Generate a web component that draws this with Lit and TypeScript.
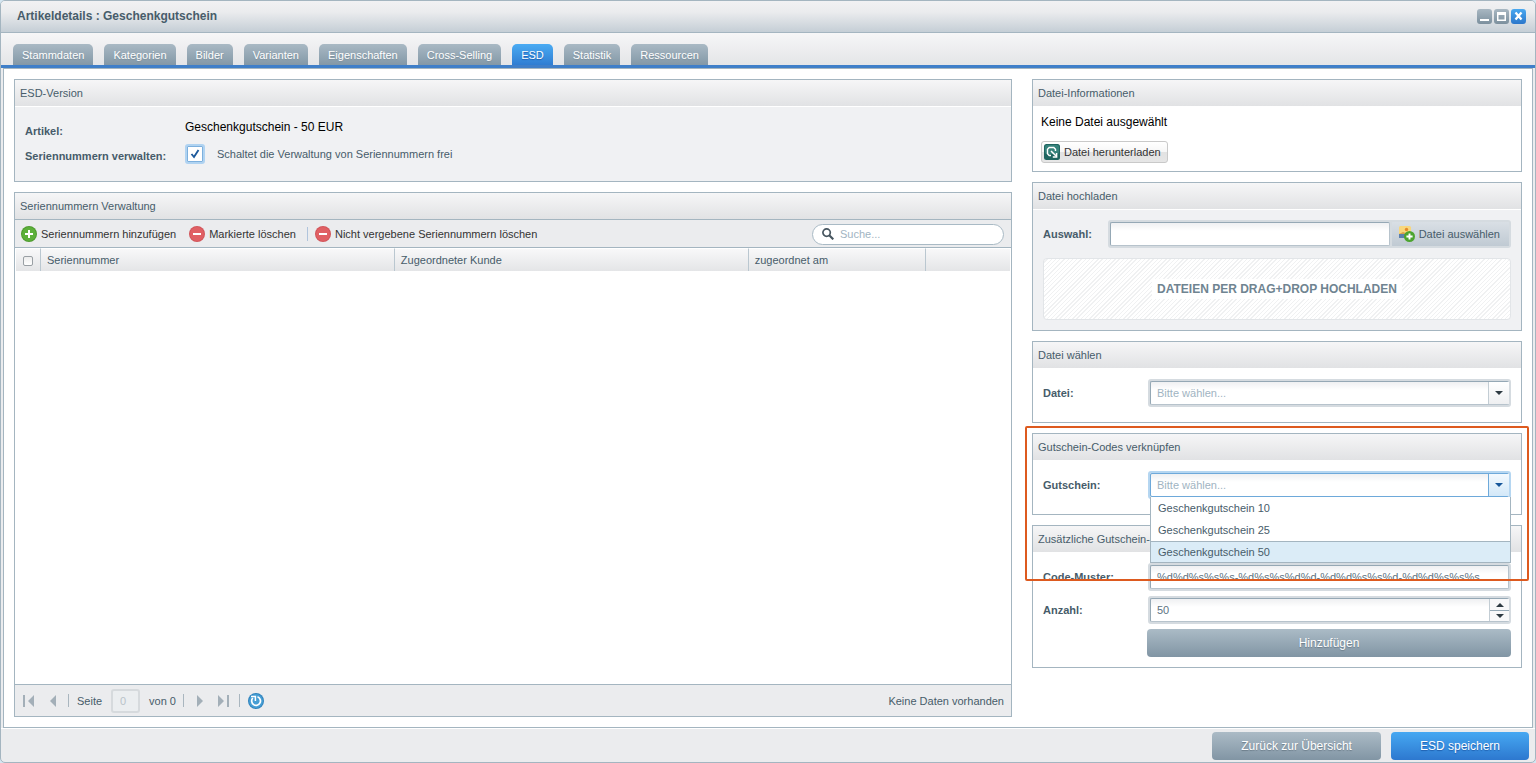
import { LitElement, html, css, svg } from "lit";
import { customElement, property } from "lit/decorators.js";
import { classMap } from "lit/directives/class-map.js";

const icons = {
  add: svg`<svg class="icon" viewBox="0 0 16 16" aria-hidden="true"><circle cx="8" cy="8" r="8" fill="#4d9a2e"/><circle cx="8" cy="8" r="7" fill="#5cb03a"/><path d="M8 4v8M4 8h8" stroke="#fff" stroke-width="2"/></svg>`,
  remove: svg`<svg class="icon" viewBox="0 0 16 16" aria-hidden="true"><circle cx="8" cy="8" r="8" fill="#d2555a"/><circle cx="8" cy="8" r="7" fill="#e06064"/><path d="M4 8h8" stroke="#fff" stroke-width="2"/></svg>`,
  download: svg`<svg class="icon" viewBox="0 0 16 16" aria-hidden="true"><rect width="16" height="16" rx="2.5" fill="#1f6560"/><rect x="1" y="1" width="14" height="9" rx="2" fill="#36827b"/><path d="M7 11.500H5.200L3.500 9.800V5.200L5.200 3.500H9.800L11.500 5.200V7" fill="none" stroke="#fff" stroke-width="1.400"/><path d="M7 7L11.800 11.800M12.600 9v4H8.800" fill="none" stroke="#fff" stroke-width="1.500"/></svg>`,
  picture: svg`<svg class="icon" viewBox="0 0 16 16" aria-hidden="true"><rect x="0" y="0" width="12" height="10" rx="1.500" fill="#f8d77d"/><circle cx="7.500" cy="3.500" r="1.700" fill="#e58a2a"/><rect x="0" y="8" width="7" height="4" fill="#5b7fae"/><path d="M0 8l4-2 5 2z" fill="#d9a14c"/><circle cx="10.500" cy="10.500" r="5.500" fill="#4ca42f"/><path d="M10.500 7.400v6.200M7.400 10.500h6.200" stroke="#fff" stroke-width="1.900"/></svg>`,
  search: svg`<svg class="lens" viewBox="0 0 12 12" aria-hidden="true"><circle cx="4.600" cy="4.600" r="3.700" fill="none" stroke="#475660" stroke-width="1.700"/><path d="M7.200 7.200L11.300 11.300" stroke="#475660" stroke-width="2.200"/></svg>`,
  first: svg`<svg class="icon" viewBox="0 0 16 16" aria-hidden="true"><path d="M2 2h2v12H2zM13 2v12L7 8z" fill="#a3afb8"/></svg>`,
  prev: svg`<svg class="icon" viewBox="0 0 16 16" aria-hidden="true"><path d="M11 2v12L5 8z" fill="#a3afb8"/></svg>`,
  next: svg`<svg class="icon" viewBox="0 0 16 16" aria-hidden="true"><path d="M5 2v12l6-6z" fill="#a3afb8"/></svg>`,
  last: svg`<svg class="icon" viewBox="0 0 16 16" aria-hidden="true"><path d="M11 2h2v12h-2zM2 2v12l6-6z" fill="#a3afb8"/></svg>`,
  refresh: svg`<svg class="icon" viewBox="0 0 16 16" aria-hidden="true"><circle cx="8" cy="8" r="8" fill="#2f83bd"/><circle cx="8" cy="8" r="7" fill="#469ed4"/><path d="M9.500 3.800A4.400 4.400 0 1 1 4.800 5" fill="none" stroke="#fff" stroke-width="1.700"/><path d="M3 3.600h4.400v4.400" fill="none" stroke="#fff" stroke-width="1.500"/></svg>`,
  down: svg`<svg class="arrow" viewBox="0 0 8 4" aria-hidden="true"><path d="M0 0h8L4 4z" fill="currentColor"/></svg>`,
  up: svg`<svg class="arrow" viewBox="0 0 8 4" aria-hidden="true"><path d="M0 4h8L4 0z" fill="currentColor"/></svg>`,
  tick: svg`<svg class="tick" viewBox="0 0 10 10" aria-hidden="true"><path d="M1.500 5l2.500 3L8.500 1" fill="none" stroke="#1d5a9c" stroke-width="1.900"/></svg>`,
  minimize: svg`<svg class="tool" viewBox="0 0 15 15" aria-hidden="true"><path d="M3 10h9v2H3z" fill="#fff"/></svg>`,
  maximize: svg`<svg class="tool" viewBox="0 0 15 15" aria-hidden="true"><path d="M3 3h9v9H3zM4.500 6v4.500h6V6z" fill="#fff" fill-rule="evenodd"/></svg>`,
  close: svg`<svg class="tool" viewBox="0 0 15 15" aria-hidden="true"><path d="M4.500 3.500l6 7M10.500 3.500l-6 7" stroke="#fff" stroke-width="2.300"/></svg>`,
};

@customElement("esd-panel")
export class EsdPanel extends LitElement {
  @property() heading = "";
  @property({ type: Boolean, reflect: true }) tinted = false;
  @property({ type: Boolean, reflect: true }) flush = false;

  static styles = css`
    :host { display: flex; flex-direction: column; box-sizing: border-box; border: 1px solid #a4b5c0; background: #fff; }
    .heading { margin: 0; padding: 0 5px; font-size: 11px; font-weight: normal; line-height: 26px; color: #475c6a; background: linear-gradient(#f6f6f7, #e1e2e4); border-bottom: 1px solid #fff; }
    .body { flex: 1; display: flex; flex-direction: column; min-height: 0; }
    :host([tinted]) .body { background: #f0f1f3; }
    :host([flush]) .heading { border-bottom-color: #a4b5c0; }
  `;

  render() {
    return html`<h2 class="heading">${this.heading}</h2><div class="body"><slot></slot></div>`;
  }
}

@customElement("app-root")
export class AppRoot extends LitElement {
  private tabs = ["Stammdaten", "Kategorien", "Bilder", "Varianten", "Eigenschaften", "Cross-Selling", "ESD", "Statistik", "Ressourcen"];
  private vouchers = ["Geschenkgutschein 10", "Geschenkgutschein 25", "Geschenkgutschein 50"];

  static styles = css`
    :host { display: block; height: 100vh; min-height: 720px; background: #d5e6f1; font-family: "Liberation Sans", Arial, sans-serif; font-size: 11px; line-height: 16px; color: #475c6a; }
    * { box-sizing: border-box; }
    button, input, select { font: inherit; color: inherit; margin: 0; }
    button { border: 0; padding: 0; background: none; cursor: pointer; }
    .icon { display: block; flex: none; width: 16px; height: 16px; }
    .window { display: flex; flex-direction: column; height: 100%; border: 1px solid #a4b5c0; border-radius: 5px; overflow: hidden; background: #ebecee; }

    .titlebar { display: flex; align-items: center; justify-content: space-between; height: 32px; padding: 0 9px 0 16px; border-bottom: 1px solid #a4b5c0; background: linear-gradient(#f1f1f3, #ebecee 35%, #c5ced6); }
    .title { margin: 0; padding-bottom: 2px; font-size: 12px; font-weight: bold; }
    .tools { display: flex; gap: 2px; }
    .tool-button { border-radius: 3px; background: linear-gradient(#a8b7c2, #7c909e); }
    .tool-button.close { background: linear-gradient(#49a8f0, #2c77cb); }
    .tool { display: block; width: 15px; height: 15px; }

    .tabs { display: flex; align-items: flex-end; gap: 11px; height: 35px; padding: 0 12px; border-bottom: 3px solid #3f7fc9; background: linear-gradient(#f6f6f7, #e4e5e7); }
    .tab { height: 21px; padding: 1px 9px 0; border-radius: 5px 5px 0 0; color: #fff; background: linear-gradient(#a9b9c4, #8398a7); text-shadow: 0 1px 1px #7d8f9c; }
    .tab.active { background: linear-gradient(#4aabf3, #2f7dd2); text-shadow: 0 1px 1px #1f5fae; }

    .content { flex: 1; min-height: 0; display: grid; grid-template-columns: minmax(0, 1fr) 490px; gap: 20px; margin: 0 2px; padding: 10px; border: 1px solid #a4b5c0; background: #fff; }
    .column { display: flex; flex-direction: column; gap: 10px; min-width: 0; }
    .grow { flex: 1; min-height: 0; }

    .version { display: grid; grid-template-columns: 160px 1fr; grid-template-rows: 22px 20px; row-gap: 5px; padding: 10px 10px 17px; }
    .version-label { align-self: end; }
    .label { font-weight: bold; }
    .value { font-size: 12px; line-height: 20px; color: #000; }
    .check-row { display: flex; align-items: center; gap: 12px; }
    .check { display: grid; width: 20px; height: 20px; place-items: center; }
    .check-input { grid-area: 1 / 1; appearance: none; width: 20px; height: 20px; border: 2px solid #b0d3f1; border-radius: 3px; background: #fff; box-shadow: inset 0 0 0 1px #7db0dd; }
    .tick { grid-area: 1 / 1; width: 10px; height: 10px; pointer-events: none; }

    .toolbar { display: flex; align-items: center; height: 28px; padding: 0 7px 0 6px; border-bottom: 1px solid #a4b5c0; background: #ebecee; color: #333; }
    .tool-item { display: flex; align-items: center; gap: 4px; margin-right: 13px; }
    .tool-item.before-line { margin-right: 11px; }
    .line { width: 1px; height: 14px; background: #b0c4dc; margin-right: 7px; }
    .search { position: relative; width: 192px; margin-left: auto; padding-top: 1px; }
    .search-input { display: block; width: 100%; height: 21px; padding: 0 12px 0 27px; border: 1px solid #a9bac5; border-radius: 11px; background: #fff; outline: 0; }
    .lens { position: absolute; left: 10px; top: 5px; width: 12px; height: 12px; }
    ::placeholder { color: #9fb4c2; opacity: 1; }

    .grid { flex: 1; background: #fff; border: 0 solid #fff; border-width: 0 1px; }
    .table { width: 100%; table-layout: fixed; border-collapse: separate; border-spacing: 0; }
    .col-check { width: 25px; }
    .col-wide { width: 35.6%; }
    .col-date { width: 17.8%; }
    .head-cell { height: 23px; padding: 0 6px; text-align: left; font-weight: normal; border-right: 1px solid #bac7d0; background: linear-gradient(#f8f8f9, #e4e5e7); border-top: 1px solid #fff; }
    .head-cell:last-child { border-right: 0; }
    .head-cell.first { padding: 2px 0 0 7px; }
    .select-all { display: block; appearance: none; width: 10px; height: 10px; border: 1px solid #999fa4; border-radius: 2px; background: linear-gradient(#ececec, #fff); }

    .paging { display: flex; align-items: center; height: 32px; padding: 0 7px 0 6px; border-top: 1px solid #a4b5c0; background: #ebecee; }
    .paging .line { height: 13px; margin: 0 8px 0 7px; background: #a9b6bf; }
    .page-nav + .page-nav { margin-left: 8px; }
    .page-input { width: 29px; height: 24px; margin: 0 9px; padding: 0 7px; border: 2px solid #d6dadd; border-radius: 3px; background: #ebeef0; color: #b9c3ca; outline: 0; }
    .status { margin-left: auto; }

    .info { display: flex; flex-direction: column; align-items: flex-start; gap: 11px; padding: 8px; font-size: 12px; line-height: 15px; color: #000; }
    .download { display: flex; align-items: center; gap: 4px; height: 22px; padding: 0 6px 0 2px; border: 1px solid #c9c9c9; border-radius: 3px; background: linear-gradient(#fff, #f6f6f6 50%, #e2e2e2 50%, #e6e6e6); font-size: 11px; color: #333; }

    .form { display: flex; flex-direction: column; gap: 5px; padding: 10px; }
    .form.single { padding-bottom: 15px; }
    .form.upload { gap: 10px; }
    .row { display: grid; grid-template-columns: 105px minmax(0, 1fr); align-items: center; }
    .row.short { grid-template-columns: 65px minmax(0, 1fr); }
    .field { position: relative; display: flex; height: 28px; border: 2px solid #d5dbe0; border-radius: 3px; background: #d5dbe0; }
    .control { flex: 1; min-width: 0; height: 24px; padding: 0 6px; border: 1px solid #b7c3cc; border-top-color: #95a8b5; border-left-color: #95a8b5; border-radius: 2px; background: linear-gradient(#eff0f2, #fff 8px); color: #5d7382; outline: 0; appearance: none; }
    .control.select { color: #9fb4c2; padding-right: 26px; }
    .control.number { appearance: textfield; }
    .control.number::-webkit-inner-spin-button { appearance: none; }
    .trigger { position: absolute; right: 0; top: 1px; display: grid; place-items: center; width: 21px; height: 22px; border-left: 1px solid #c3cdd4; background: linear-gradient(#fff, #eeeff1); color: #2e3a42; pointer-events: none; }
    .arrow { display: block; width: 8px; height: 4px; }
    .field.focused { border-color: #b5d6f1; }
    .focused .control { border-color: #6ea9da; }
    .focused .trigger { border-left-color: #6ea9da; background: linear-gradient(#f3f9fe, #d3e8f8); color: #17569a; }
    .spinner { position: absolute; right: 0; top: 1px; display: grid; grid-template-rows: 1fr 1fr; width: 20px; height: 22px; border-left: 1px solid #c3cdd4; background: #f8f8f9; color: #2e3a42; }
    .spin { display: grid; place-items: center; }
    .spin + .spin { border-top: 1px solid #95a8b5; }
    .add-codes { height: 28px; margin-left: 104px; border-radius: 4px; background: linear-gradient(#abbbc6, #8195a4); color: #fff; font-size: 12px; text-shadow: 0 1px 1px #6b7c89; }

    .file-field { display: flex; gap: 2px; border: 2px solid #d5dbe0; border-radius: 3px; height: 28px; background: #d5dbe0; }
    .browse { display: flex; align-items: center; gap: 4px; padding: 0 9px 0 7px; background: linear-gradient(#d9dfe5, #c0cad3); }
    .dropzone { display: grid; place-items: center; height: 62px; border: 1px solid #e2e5e8; border-radius: 4px; background: repeating-linear-gradient(135deg, #fff 0 2px, #f0f1f2 2px 3px); }
    .drop-text { padding: 2px 5px; background: #fff; font-size: 12px; font-weight: bold; color: #6f8491; }

    .linked { position: relative; z-index: 1; }
    .menu { position: absolute; z-index: 2; top: 24px; left: 0; right: -2px; margin: 0; padding: 0; list-style: none; border: 1px solid #a4b5c0; border-top: 0; background: #fff; }
    .option { height: 22px; padding: 0 7px; line-height: 22px; }
    .option:last-child { height: 21px; }
    .option.hover { border-top: 1px solid #a4b5c0; line-height: 20px; background: #dbecf7; }
    .marker { position: absolute; z-index: 3; left: -8px; right: -8px; top: -8px; height: 155px; border: 2px solid #dd5a1f; border-radius: 2px; pointer-events: none; }

    .footer { display: flex; justify-content: flex-end; align-items: center; gap: 10px; height: 34px; padding: 1px 6px 0; border-top: 1px solid #fff; }
    .action { height: 28px; padding: 0 29px; border-radius: 4px; background: linear-gradient(#abbbc6, #8195a4); color: #fff; font-size: 12px; text-shadow: 0 1px 1px #6b7c89; }
    .action.primary { background: linear-gradient(#46a8f2, #2d78cf); text-shadow: 0 1px 1px #1f5fae; }
  `;

  private renderLeft() {
    return html`
      <div class="column">
        <esd-panel heading="ESD-Version" tinted>
          <div class="version">
            <span class="label version-label">Artikel:</span>
            <span class="value">Geschenkgutschein - 50 EUR</span>
            <label class="label version-label" for="manage">Seriennummern verwalten:</label>
            <div class="check-row">
              <span class="check"><input class="check-input" id="manage" type="checkbox" checked />${icons.tick}</span>
              <span>Schaltet die Verwaltung von Seriennummern frei</span>
            </div>
          </div>
        </esd-panel>
        <esd-panel class="grow" heading="Seriennummern Verwaltung" flush>
          <div class="toolbar">
            <button class="tool-item">${icons.add}Seriennummern hinzufügen</button>
            <button class="tool-item before-line">${icons.remove}Markierte löschen</button>
            <span class="line"></span>
            <button class="tool-item">${icons.remove}Nicht vergebene Seriennummern löschen</button>
            <div class="search">
              <input class="search-input" type="text" placeholder="Suche..." aria-label="Suche" />${icons.search}
            </div>
          </div>
          <div class="grid">
            <table class="table">
              <colgroup><col class="col-check" /><col class="col-wide" /><col class="col-wide" /><col class="col-date" /><col /></colgroup>
              <thead>
                <tr>
                  <th class="head-cell first"><input class="select-all" type="checkbox" aria-label="Alle auswählen" /></th>
                  <th class="head-cell">Seriennummer</th>
                  <th class="head-cell">Zugeordneter Kunde</th>
                  <th class="head-cell">zugeordnet am</th>
                  <th class="head-cell"></th>
                </tr>
              </thead>
              <tbody></tbody>
            </table>
          </div>
          <div class="paging">
            <button class="page-nav" aria-label="Erste Seite">${icons.first}</button>
            <button class="page-nav" aria-label="Vorherige Seite">${icons.prev}</button>
            <span class="line"></span>
            <label for="page">Seite</label>
            <input class="page-input" id="page" type="text" value="0" disabled />
            <span>von 0</span>
            <span class="line"></span>
            <button class="page-nav" aria-label="Nächste Seite">${icons.next}</button>
            <button class="page-nav" aria-label="Letzte Seite">${icons.last}</button>
            <span class="line"></span>
            <button aria-label="Aktualisieren">${icons.refresh}</button>
            <span class="status">Keine Daten vorhanden</span>
          </div>
        </esd-panel>
      </div>
    `;
  }

  private renderRight() {
    return html`
      <div class="column">
        <esd-panel heading="Datei-Informationen">
          <div class="info">
            <span>Keine Datei ausgewählt</span>
            <button class="download">${icons.download}Datei herunterladen</button>
          </div>
        </esd-panel>
        <esd-panel heading="Datei hochladen" tinted>
          <div class="form upload">
            <div class="row short">
              <label class="label" for="upload">Auswahl:</label>
              <div class="file-field">
                <input class="control" id="upload" type="text" />
                <button class="browse">${icons.picture}Datei auswählen</button>
              </div>
            </div>
            <div class="dropzone"><span class="drop-text">DATEIEN PER DRAG+DROP HOCHLADEN</span></div>
          </div>
        </esd-panel>
        <esd-panel heading="Datei wählen">
          <div class="form single">
            <div class="row">
              <label class="label" for="file">Datei:</label>
              <div class="field">
                <select class="control select" id="file"><option>Bitte wählen...</option></select>
                <span class="trigger">${icons.down}</span>
              </div>
            </div>
          </div>
        </esd-panel>
        <esd-panel class="linked" heading="Gutschein-Codes verknüpfen">
          <div class="form single">
            <div class="row">
              <label class="label" for="voucher">Gutschein:</label>
              <div class="field focused">
                <select class="control select" id="voucher"><option>Bitte wählen...</option></select>
                <span class="trigger">${icons.down}</span>
                <ul class="menu" role="listbox" aria-label="Gutschein">
                  ${this.vouchers.map((name, i) => html`<li role="option" class=${classMap({ option: true, hover: i === 2 })}>${name}</li>`)}
                </ul>
              </div>
            </div>
          </div>
          <div class="marker"></div>
        </esd-panel>
        <esd-panel heading="Zusätzliche Gutschein-Codes">
          <div class="form">
            <div class="row">
              <label class="label" for="pattern">Code-Muster:</label>
              <div class="field"><input class="control" id="pattern" type="text" value="%d%d%s%s%s-%d%s%s%d%d-%d%d%s%s%d-%d%d%s%s%s" /></div>
            </div>
            <div class="row">
              <label class="label" for="count">Anzahl:</label>
              <div class="field">
                <input class="control number" id="count" type="number" value="50" />
                <span class="spinner">
                  <button class="spin" aria-label="Mehr">${icons.up}</button>
                  <button class="spin" aria-label="Weniger">${icons.down}</button>
                </span>
              </div>
            </div>
            <button class="add-codes">Hinzufügen</button>
          </div>
        </esd-panel>
      </div>
    `;
  }

  render() {
    return html`
      <div class="window">
        <header class="titlebar">
          <h1 class="title">Artikeldetails : Geschenkgutschein</h1>
          <div class="tools">
            <button class="tool-button" aria-label="Minimieren">${icons.minimize}</button>
            <button class="tool-button" aria-label="Maximieren">${icons.maximize}</button>
            <button class="tool-button close" aria-label="Schließen">${icons.close}</button>
          </div>
        </header>
        <nav class="tabs">
          ${this.tabs.map((name) => html`<button class=${classMap({ tab: true, active: name === "ESD" })}>${name}</button>`)}
        </nav>
        <main class="content">${this.renderLeft()}${this.renderRight()}</main>
        <footer class="footer">
          <button class="action">Zurück zur Übersicht</button>
          <button class="action primary">ESD speichern</button>
        </footer>
      </div>
    `;
  }
}
